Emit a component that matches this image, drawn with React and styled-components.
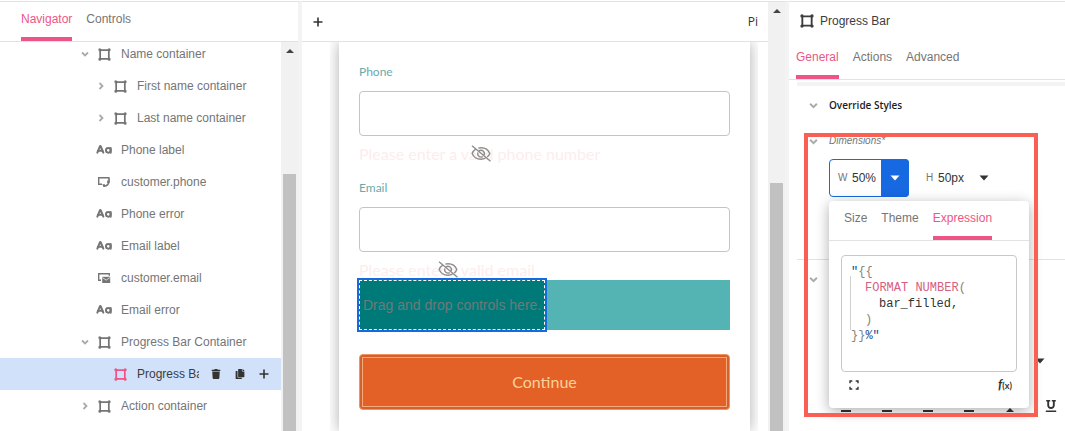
import React from "react";
import styled, { createGlobalStyle, css } from "styled-components";
import { CaseSensitive } from "lucide-react";
import { FaTrash, FaCopy, FaUnderline } from "react-icons/fa";

const pink = "#ee5586";
const blue = "#1669e0";
const line = "#e2e2e2";

const GlobalStyle = createGlobalStyle`
  *, *::before, *::after { box-sizing: border-box; }
  body { margin: 0; background: #fff; color: #757575; font-family: "Liberation Sans", Arial, sans-serif; font-size: 12px; line-height: 16px; }
  button, input, textarea { font: inherit; color: inherit; }
  button { padding: 0; border: 0; background: none; cursor: pointer; }
  svg { display: block; flex: none; }
`;

const Shell = styled.div`
  display: flex;
  height: 100vh;
  margin: 0;
  padding-top: 1px;
  overflow: hidden;
`;

const Pane = styled.div`
  display: flex;
  min-width: 0;
  border-top: 1px solid ${line};
  overflow: hidden;
`;

const NavigatorPane = styled(Pane).attrs({ as: "nav" })`
  flex: none;
  width: 302px;
  flex-direction: column;
  border-right: 4px solid #f3f3f3;
`;

const CanvasPane = styled(Pane).attrs({ as: "main" })`
  flex: 1;
  border-right: 4px solid #f3f3f3;
`;

const InspectorPane = styled(Pane).attrs({ as: "aside" })`
  flex: none;
  width: 276px;
  flex-direction: column;
`;

const TabBar = styled.div`
  display: flex;
  flex: none;
  gap: 14px;
  height: 40px;
  padding-left: ${(p) => p.$inset}px;
  border-bottom: 1px solid ${line};
`;

const Tab = styled.button`
  height: 39px;
  padding-bottom: 2px;
  border-bottom: 4px solid ${(p) => (p.$active ? pink : "transparent")};
  color: ${(p) => (p.$active ? pink : "#757575")};
`;

const Split = styled.div`
  display: flex;
  flex: 1;
  min-height: 0;
`;

const Track = styled.div`
  display: flex;
  flex: none;
  flex-direction: column;
  align-items: center;
  width: 17px;
  padding-top: 7px;
  background: #f1f1f1;
`;

const UpArrow = styled.span`
  border: 4px solid transparent;
  border-top: 0;
  border-bottom-color: #444;
`;

const Thumb = styled.span`
  flex: 1;
  width: 13px;
  margin-top: ${(p) => p.$top}px;
  background: #c1c1c1;
`;

const Tree = styled.ul`
  flex: 1;
  min-width: 0;
  margin: -4px 0 0;
  padding: 0;
  list-style: none;
`;

const TreeRow = styled.li`
  display: flex;
  align-items: center;
  height: 32px;
  padding-left: ${(p) => 77 + p.$level * 16}px;
  padding-right: 5px;
  ${(p) => p.$selected && css`background: #d1e1f9; color: #3c3c3c;`}
`;

const Cell = styled.span`
  display: flex;
  flex: none;
  justify-content: center;
  width: ${(p) => p.$w}px;
  color: ${(p) => p.$tone || "inherit"};
`;

const RowName = styled.span`
  flex: 1;
  min-width: 0;
  margin: 0 5px 0 6px;
  overflow: hidden;
  white-space: nowrap;
`;

const RowAction = styled.button`
  display: flex;
  justify-content: center;
  width: 24px;
  color: #333;
`;

const CanvasColumn = styled.div`
  display: flex;
  flex: 1;
  flex-direction: column;
  min-width: 0;
`;

const CanvasBar = styled.header`
  display: flex;
  flex: none;
  align-items: center;
  justify-content: space-between;
  height: 40px;
  padding: 0 10px;
  border-bottom: 1px solid ${line};
  color: #333;
`;

const PageName = styled.span`
  font-family: "Open Sans", sans-serif;
`;

const Stage = styled.div`
  flex: 1;
  margin: 0 10px 0 28px;
  padding: 0 8px 0 9px;
  overflow: hidden;
`;

const Paper = styled.form`
  height: 100%;
  padding: 22px 20px;
  background: #fff;
  box-shadow: 0 0 14px rgba(0, 0, 0, 0.32);
  font-family: Lato, sans-serif;
`;

const FieldLabel = styled.label`
  display: block;
  margin-bottom: 11px;
  color: #68abac;
`;

const FieldInput = styled.input`
  display: block;
  width: 100%;
  height: 45px;
  padding: 0 12px;
  border: 1px solid #c4c4c4;
  border-radius: 4px;
  background: #fff;
`;

const FieldError = styled.p`
  margin: 8px 0 ${(p) => p.$after}px;
  color: #fdeded;
  font-size: 16px;
  line-height: 20px;
`;

const ErrorText = styled.span`
  position: relative;
  display: inline-block;
`;

const HiddenMark = styled.span`
  position: absolute;
  top: 1px;
  left: 50%;
  margin-left: -9px;
`;

const ProgressTrack = styled.div`
  height: 50px;
  margin-bottom: 24px;
  background: #53b4b3;
`;

const ProgressFill = styled.div`
  display: flex;
  align-items: center;
  width: 50%;
  height: 50px;
  padding-left: 3px;
  border: 1px dashed #fff;
  outline: 2px solid ${blue};
  background: #007a78;
  color: #6c7b7a;
  font-family: "Liberation Sans", Arial, sans-serif;
  font-size: 14px;
  white-space: nowrap;
`;

const ContinueButton = styled.button`
  display: block;
  width: 100%;
  height: 56px;
  padding: 2px;
  border: 1px solid #f0935c;
  border-radius: 4px;
  background: #d3612e;
`;

const ContinueFace = styled.span`
  display: flex;
  align-items: center;
  justify-content: center;
  height: 100%;
  border: 1px solid #f7a878;
  background: #e36127;
  color: #fcd298;
  font-size: 16px;
`;

const InspectorTitle = styled.h1`
  display: flex;
  flex: none;
  align-items: center;
  gap: 6px;
  height: 38px;
  margin: 0;
  padding-left: 11px;
  color: #3c3c3c;
  font-size: 12px;
  font-weight: 400;
`;

const InspectorBody = styled.div`
  margin: 2px 0 0 8px;
  border-top: 4px solid #f3f3f3;
`;

const SectionHead = styled.h2`
  display: flex;
  align-items: center;
  gap: 8px;
  height: 38px;
  margin: 0;
  padding-left: 8px;
  color: #1c1c1c;
  font: 600 10px/16px "Open Sans", sans-serif;
`;

const Dimensions = styled.section`
  position: relative;
  height: 135px;
  padding: 9px 0 0 8px;
`;

const DimensionsHead = styled.h3`
  display: flex;
  align-items: center;
  gap: 8px;
  height: 16px;
  margin: 0 0 10px;
  font-size: 10px;
  font-style: italic;
  font-weight: 400;
`;

const SizeRow = styled.div`
  display: flex;
  align-items: center;
  gap: 17px;
  padding-left: 24px;
`;

const SizeField = styled.div`
  display: flex;
  align-items: center;
  height: 38px;
  ${(p) => p.$active && css`border: 1px solid ${blue}; border-radius: 4px; padding-left: 8px; width: 80px;`}
`;

const SizeLabel = styled.label`
  flex: none;
  width: ${(p) => p.$w}px;
  font-size: 10px;
`;

const SizeInput = styled.input`
  width: 32px;
  min-width: 0;
  padding: 0;
  border: 0;
  background: none;
  color: #333;
`;

const UnitButton = styled.button`
  display: flex;
  align-items: center;
  justify-content: center;
  width: 28px;
  height: 38px;
  color: #333;
  ${(p) => p.$active && css`flex: none; margin-left: auto; margin-right: -1px; border-radius: 0 4px 4px 0; background: ${blue}; color: #fff;`}
`;

const Highlight = styled.div`
  position: absolute;
  z-index: 3;
  top: 9px;
  left: 7px;
  width: 234px;
  height: 284px;
  border: 4px solid #f95f53;
  pointer-events: none;
`;

const Popover = styled.div`
  position: absolute;
  z-index: 2;
  top: 77px;
  left: 32px;
  width: 200px;
  height: 207px;
  border-radius: 4px;
  background: #fff;
  box-shadow: 0 3px 14px rgba(0, 0, 0, 0.32);
`;

const Editor = styled.div`
  position: relative;
  height: 117px;
  margin: 14px 12px 0;
  padding: 8px 9px;
  border: 1px solid #c8c8c8;
  border-radius: 4px;
  font-family: "Liberation Mono", monospace;
`;

const Code = styled.div`
  color: #333;
  white-space: pre;
`;

const CodeLine = styled.div`
  padding-left: ${(p) => p.$depth * 14}px;
`;

const CodeInput = styled.textarea`
  position: absolute;
  inset: 0;
  width: 100%;
  height: 100%;
  padding: 8px 9px;
  border: 0;
  outline: 0;
  background: none;
  caret-color: #333;
  resize: none;
`;

const IndentGuide = styled.span`
  position: absolute;
  top: 20px;
  left: 8px;
  height: 54px;
  border-left: 1px solid #d0d0d0;
`;

const Token = styled.span`
  color: ${(p) => ({ brace: "#85857a", fn: "#d5607f", str: "#174a8c" })[p.$kind]};
`;

const PopoverFooter = styled.div`
  display: flex;
  align-items: center;
  justify-content: space-between;
  padding: 4px 17px 0 20px;
  color: #333;
`;

const FxButton = styled.button`
  font: italic 700 13px/16px Lato, sans-serif;
`;

const FxArg = styled.span`
  font-size: 9px;
  font-style: normal;
`;

const TextSection = styled.section`
  border-top: 1px solid ${line};
`;

const UnitRow = styled.div`
  display: flex;
  justify-content: flex-end;
  margin-top: 60px;
  padding-right: 20px;
  color: #333;
`;

const FormatRow = styled.div`
  display: flex;
  align-items: center;
  gap: 1px;
  margin-top: 36px;
  padding-left: 29px;
  color: #333;
`;

const FormatButton = styled.button`
  display: flex;
  flex: none;
  justify-content: center;
  width: 40px;
`;

const FrameIcon = ({ size = 13 }) => (
  <svg width={size} height={size} viewBox="0 0 12 12" fill="none" stroke="currentColor">
    <path d="M2 2h8v8H2z" strokeWidth="1.600" />
    <path d="M.3 1.700a1.400 1.400 0 1 0 2.800 0a1.400 1.400 0 1 0-2.800 0M8.900 1.700a1.400 1.400 0 1 0 2.800 0a1.400 1.400 0 1 0-2.800 0M.3 10.300a1.400 1.400 0 1 0 2.800 0a1.400 1.400 0 1 0-2.800 0M8.900 10.300a1.400 1.400 0 1 0 2.800 0a1.400 1.400 0 1 0-2.800 0" fill="currentColor" stroke="none" />
  </svg>
);

const PhoneIcon = () => (
  <svg width="14" height="12" viewBox="0 0 14 12" fill="none" stroke="currentColor">
    <path d="M5 8.200H1.700V1.700h10.600" strokeWidth="1.400" />
    <path d="M12 1.500v3.200c0 3-2 5.200-5.200 5.600" strokeWidth="1.600" />
    <path d="M10.200 4.600h2.500v2.200l-2.600.2zM5.300 8.300h2.700v2.700h-1.600z" fill="currentColor" stroke="none" />
  </svg>
);

const EmailIcon = () => (
  <svg width="14" height="12" viewBox="0 0 14 12">
    <path d="M4 8.200H1.700V1.700h10.600v2" fill="none" stroke="currentColor" strokeWidth="1.400" />
    <path d="M5.200 4.800h8v6.200h-8z" fill="currentColor" />
    <path d="M5.400 5.600l3.800 2.500l3.800-2.500" fill="none" stroke="#fff" strokeWidth=".7" />
  </svg>
);

const Chevron = ({ open, size = 8 }) => (
  <svg width={size} height={size} viewBox="0 0 8 8" fill="none" stroke="#ababab" strokeWidth="1.800">
    <path d={open ? "M1 2.500l3 3l3-3" : "M2.500 1l3 3l-3 3"} />
  </svg>
);

const PlusIcon = () => (
  <svg width="12" height="12" viewBox="0 0 12 12" stroke="currentColor" strokeWidth="1.600">
    <path d="M6 1.500v9M1.500 6h9" />
  </svg>
);

const Caret = () => (
  <svg width="10" height="6" viewBox="0 0 10 6" fill="currentColor">
    <path d="M.5.5h9L5 5.500z" />
  </svg>
);

const ExpandIcon = () => (
  <svg width="10" height="10" viewBox="0 0 10 10" fill="none" stroke="currentColor" strokeWidth="1.400">
    <path d="M1 3.300V1h2.300M6.700 1H9v2.300M9 6.700V9H6.700M3.300 9H1V6.700" />
  </svg>
);

const EyeOffIcon = () => (
  <svg width="20" height="17" viewBox="0 0 20 17" fill="none" stroke="#8d8d8d" strokeWidth="1.400">
    <path d="M4.800 4.200C3 5.300 1.700 6.800 1.200 8.500c1.400 3.600 4.800 5.700 8.800 5.700c1.700 0 3.200-.4 4.500-1M7.300 3.100c.9-.2 1.800-.4 2.700-.4c4 0 7.400 2.200 8.800 5.800c-.5 1.400-1.400 2.600-2.600 3.500" />
    <path d="M8 5.800a3.500 3.500 0 0 1 5.200 4.100M6.800 7.500a3.500 3.500 0 0 0 4.900 4.200M1 .8l18.500 15.400" />
  </svg>
);

const AlignIcon = () => (
  <svg width="10" height="12" viewBox="0 0 10 12" stroke="currentColor" strokeWidth="2">
    <path d="M0 1h10M0 6h10M0 11h10" />
  </svg>
);

const SpacingIcon = () => (
  <svg width="10" height="12" viewBox="0 0 10 12" fill="currentColor">
    <path d="M5 8l4 4H1zM5 0l4 4H1z" />
  </svg>
);

const icons = {
  frame: <FrameIcon />,
  text: <CaseSensitive size={16} strokeWidth={3} />,
  phone: <PhoneIcon />,
  email: <EmailIcon />,
};

const nodes = [
  { name: "Name container", icon: "frame", level: 0, state: "open" },
  { name: "First name container", icon: "frame", level: 1, state: "closed" },
  { name: "Last name container", icon: "frame", level: 1, state: "closed" },
  { name: "Phone label", icon: "text", level: 0 },
  { name: "customer.phone", icon: "phone", level: 0 },
  { name: "Phone error", icon: "text", level: 0 },
  { name: "Email label", icon: "text", level: 0 },
  { name: "customer.email", icon: "email", level: 0 },
  { name: "Email error", icon: "text", level: 0 },
  { name: "Progress Bar Container", icon: "frame", level: 0, state: "open" },
  { name: "Progress Bar", icon: "frame", level: 1, selected: true },
  { name: "Action container", icon: "frame", level: 0, state: "closed" },
];

const Scrollbar = ({ top }) => (
  <Track aria-hidden="true">
    <UpArrow />
    <Thumb $top={top} />
  </Track>
);

const Field = ({ id, label, error, after }) => (
  <div>
    <FieldLabel htmlFor={id}>{label}</FieldLabel>
    <FieldInput id={id} />
    <FieldError $after={after}>
      <ErrorText>
        {error}
        <HiddenMark><EyeOffIcon /></HiddenMark>
      </ErrorText>
    </FieldError>
  </div>
);

export default function App() {
  return (
    <Shell>
      <GlobalStyle />
      <NavigatorPane>
        <TabBar $inset={21}>
          <Tab $active>Navigator</Tab>
          <Tab>Controls</Tab>
        </TabBar>
        <Split>
          <Tree>
            {nodes.map((n) => (
              <TreeRow key={n.name} $level={n.level} $selected={n.selected}>
                <Cell $w={16}>{n.state && <Chevron open={n.state === "open"} />}</Cell>
                <Cell $w={22} $tone={n.selected && pink}>{icons[n.icon]}</Cell>
                <RowName>{n.name}</RowName>
                {n.selected && (
                  <>
                    <RowAction aria-label="Delete"><FaTrash size={10} /></RowAction>
                    <RowAction aria-label="Duplicate"><FaCopy size={10} /></RowAction>
                    <RowAction aria-label="Add"><PlusIcon /></RowAction>
                  </>
                )}
              </TreeRow>
            ))}
          </Tree>
          <Scrollbar top={121} />
        </Split>
      </NavigatorPane>

      <CanvasPane>
        <CanvasColumn>
          <CanvasBar>
            <button aria-label="Add"><PlusIcon /></button>
            <PageName>Pi</PageName>
          </CanvasBar>
          <Stage>
            <Paper>
              <Field id="phone" label="Phone" error="Please enter a valid phone number" after={16} />
              <Field id="email" label="Email" error="Please enter a valid email" after={0} />
              <ProgressTrack>
                <ProgressFill>Drag and drop controls here.</ProgressFill>
              </ProgressTrack>
              <ContinueButton type="button">
                <ContinueFace>Continue</ContinueFace>
              </ContinueButton>
            </Paper>
          </Stage>
        </CanvasColumn>
        <Scrollbar top={170} />
      </CanvasPane>

      <InspectorPane>
        <InspectorTitle>
          <FrameIcon size={14} />
          Progress Bar
        </InspectorTitle>
        <TabBar $inset={7}>
          <Tab $active>General</Tab>
          <Tab>Actions</Tab>
          <Tab>Advanced</Tab>
        </TabBar>
        <InspectorBody>
          <SectionHead><Cell $w={16}><Chevron open size={9} /></Cell>Override Styles</SectionHead>
          <Dimensions>
            <DimensionsHead><Cell $w={16}><Chevron open size={9} /></Cell>Dimensions*</DimensionsHead>
            <SizeRow>
              <SizeField $active>
                <SizeLabel $w={14} htmlFor="width">W</SizeLabel>
                <SizeInput id="width" defaultValue="50%" />
                <UnitButton $active aria-label="Width unit"><Caret /></UnitButton>
              </SizeField>
              <SizeField>
                <SizeLabel $w={12} htmlFor="height">H</SizeLabel>
                <SizeInput id="height" defaultValue="50px" />
                <UnitButton aria-label="Height unit"><Caret /></UnitButton>
              </SizeField>
            </SizeRow>
            <Popover>
              <TabBar $inset={15}>
                <Tab>Size</Tab>
                <Tab>Theme</Tab>
                <Tab $active>Expression</Tab>
              </TabBar>
              <Editor>
                <IndentGuide />
                <Code>
                  <CodeLine $depth={0}><Token $kind="str">"</Token><Token $kind="brace">{"{{"}</Token></CodeLine>
                  <CodeLine $depth={1}><Token $kind="fn">FORMAT NUMBER</Token><Token $kind="brace">(</Token></CodeLine>
                  <CodeLine $depth={2}>bar_filled,</CodeLine>
                  <CodeLine $depth={1}><Token $kind="brace">)</Token></CodeLine>
                  <CodeLine $depth={0}><Token $kind="brace">{"}}"}</Token><Token $kind="str">%"</Token></CodeLine>
                </Code>
                <CodeInput aria-label="Expression" spellCheck={false} />
              </Editor>
              <PopoverFooter>
                <button aria-label="Expand"><ExpandIcon /></button>
                <FxButton aria-label="Insert function">f<FxArg>(x)</FxArg></FxButton>
              </PopoverFooter>
            </Popover>
            <Highlight />
          </Dimensions>
          <TextSection>
            <SectionHead><Cell $w={16}><Chevron open size={9} /></Cell></SectionHead>
            <UnitRow><button aria-label="Font unit"><Caret /></button></UnitRow>
            <FormatRow>
              <FormatButton aria-label="Align left"><AlignIcon /></FormatButton>
              <FormatButton aria-label="Align center"><AlignIcon /></FormatButton>
              <FormatButton aria-label="Align right"><AlignIcon /></FormatButton>
              <FormatButton aria-label="Justify"><AlignIcon /></FormatButton>
              <FormatButton aria-label="Spacing"><SpacingIcon /></FormatButton>
              <FormatButton aria-label="Underline"><FaUnderline size={12} /></FormatButton>
            </FormatRow>
          </TextSection>
        </InspectorBody>
      </InspectorPane>
    </Shell>
  );
}
